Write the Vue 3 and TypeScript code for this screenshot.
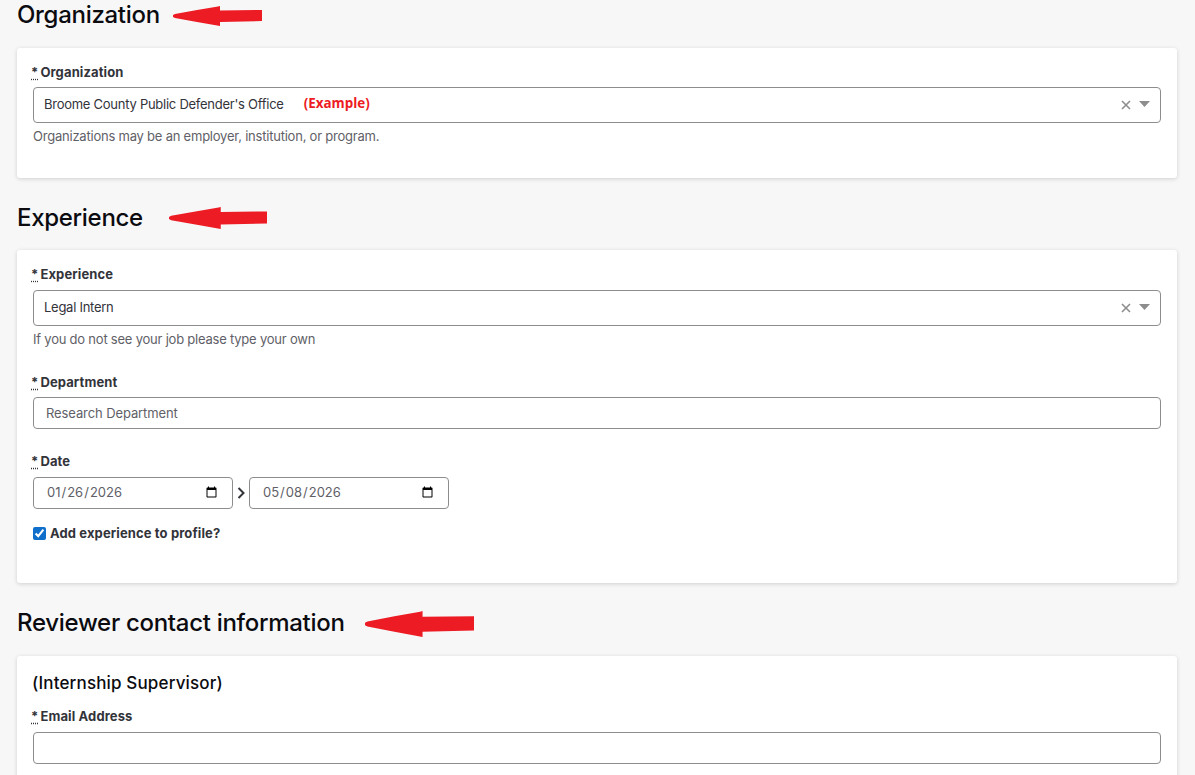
<script setup lang="ts">
const arrowPath = 'M0 9 L2 8 L24 4 L45 0.5 L47 0 L47 4.5 L89 4 L89 15 L47 16 L47 20 L24 16 L2 12 L0 11 Z'
</script>

<template>
  <main class="page">
    <header class="title-row first">
      <h2>Organization</h2>
      <svg class="arrow a1" viewBox="0 0 89 20" preserveAspectRatio="none"><path :d="arrowPath" /></svg>
    </header>
    <section class="card card-org">
      <label class="label"><abbr>*</abbr>Organization</label>
      <div class="select">
        <span class="value">Broome County Public Defender's Office</span>
        <span class="example">(Example)</span>
        <svg class="clear" viewBox="0 0 10 10"><path d="M1 1 L9 9 M9 1 L1 9" /></svg>
        <svg class="caret" viewBox="0 0 11 6"><path d="M0 0 H11 L5.5 6 Z" /></svg>
      </div>
      <p class="help">Organizations may be an employer, institution, or program.</p>
    </section>

    <header class="title-row">
      <h2>Experience</h2>
      <svg class="arrow a2" viewBox="0 0 89 20" preserveAspectRatio="none"><path :d="arrowPath" /></svg>
    </header>
    <section class="card card-exp">
      <label class="label tall"><abbr>*</abbr>Experience</label>
      <div class="select">
        <span class="value">Legal Intern</span>
        <svg class="clear" viewBox="0 0 10 10"><path d="M1 1 L9 9 M9 1 L1 9" /></svg>
        <svg class="caret" viewBox="0 0 11 6"><path d="M0 0 H11 L5.5 6 Z" /></svg>
      </div>
      <p class="help">If you do not see your job please type your own</p>

      <label class="label dept"><abbr>*</abbr>Department</label>
      <input class="text" type="text" value="Research Department" />

      <label class="label tall date-label"><abbr>*</abbr>Date</label>
      <div class="dates">
        <input class="date" type="date" value="2026-01-26" />
        <svg class="chev" viewBox="0 0 8 12"><path d="M1.5 1 L6.5 6 L1.5 11" /></svg>
        <input class="date" type="date" value="2026-05-08" />
      </div>
      <label class="check">
        <input type="checkbox" checked />
        <span>Add experience to profile?</span>
      </label>
    </section>

    <header class="title-row last">
      <h2>Reviewer contact information</h2>
      <svg class="arrow a3" viewBox="0 0 89 20" preserveAspectRatio="none"><path :d="arrowPath" /></svg>
    </header>
    <section class="card card-rev">
      <h3>(Internship Supervisor)</h3>
      <label class="label tall"><abbr>*</abbr>Email Address</label>
      <input class="text" type="text" />
    </section>
  </main>
</template>

<style scoped>
.page {
  height: 775px;
  overflow: hidden;
  box-sizing: border-box;
  padding: 0 18px 0 17px;
  background: #f7f7f7;
  font-family: Inter, "Liberation Sans", sans-serif;
  color: #33333a;
}
.title-row {
  display: flex;
  align-items: center;
  height: 28px;
  margin: 26px 0 18px;
}
.title-row.first {
  margin: 1px 0 19px;
}
.title-row.last {
  margin: 26px 0 19px;
}
h2 {
  margin: 0;
  font-size: 24px;
  line-height: 28px;
  font-weight: 500;
  letter-spacing: -0.3px;
  color: #0b0b10;
}
.arrow {
  flex: none;
  fill: #ed1c24;
}
.a1 { width: 89px; height: 20px; margin: 2px 0 0 13px; }
.a2 { width: 98px; height: 22px; margin: 0 0 0 26px; }
.a3 { width: 109px; height: 26px; margin: 2px 0 0 20px; }
.card {
  box-sizing: border-box;
  display: flex;
  flex-direction: column;
  padding: 14px 16px 0;
  background: #fff;
  border-radius: 3px;
  box-shadow: 0 1px 4px rgba(0, 0, 0, 0.16);
}
.card-org { height: 130px; }
.card-exp { height: 333px; }
.card-rev { height: 140px; }
.label {
  display: block;
  font-size: 13px;
  line-height: 20px;
  font-weight: 700;
  letter-spacing: 0.12px;
  color: #33333a;
  margin-bottom: 5px;
}
.label.tall { margin-bottom: 6px; }
.label abbr {
  margin: 0 2px 0 -2px;
  text-decoration: underline dotted;
  text-underline-offset: 2px;
}
.dept { margin-top: 24px; }
.date-label { margin-top: 22px; }
.select {
  box-sizing: border-box;
  display: flex;
  align-items: center;
  height: 36px;
  padding: 0 10px 0 10px;
  border: 1px solid #8d8d8d;
  border-radius: 4px;
  font-size: 13px;
}
.value {
  color: #33333a;
  letter-spacing: -0.26px;
  transform: translateY(-1px);
}
.example {
  margin-left: 20px;
  font-family: "Open Sans", sans-serif;
  font-size: 13.4px;
  font-weight: 700;
  color: #ed1c24;
  transform: translateY(-2px);
}
.clear {
  width: 10px;
  height: 10px;
  margin-left: auto;
  fill: none;
  stroke: #8d8d8d;
  stroke-width: 1.6;
}
.caret {
  width: 11px;
  height: 6px;
  margin-left: 8px;
  margin-top: -2px;
  fill: #8d8d8d;
}
.help {
  margin: 4px 0 0;
  font-size: 13px;
  line-height: 18px;
  letter-spacing: -0.22px;
  color: #5f5f68;
}
.text,
.date {
  box-sizing: border-box;
  height: 32px;
  padding: 0 12px;
  border: 1px solid #8d8d8d;
  border-radius: 4px;
  background: #fff;
  font-family: inherit;
  font-size: 13px;
  color: #5f5f68;
  outline: none;
}
.text {
  width: 100%;
  letter-spacing: -0.1px;
}
.dates {
  display: flex;
  align-items: center;
  gap: 4px;
}
.date {
  width: 200px;
  padding-bottom: 2px;
}
.chev {
  width: 8px;
  height: 12px;
  fill: none;
  stroke: #33333a;
  stroke-width: 2;
}
.check {
  display: flex;
  align-items: center;
  gap: 4px;
  margin-top: 14px;
  font-size: 13px;
  line-height: 20px;
  font-weight: 700;
  letter-spacing: 0.12px;
  color: #33333a;
}
.check input {
  width: 13px;
  height: 13px;
  margin: 0;
  accent-color: #0f6fcb;
}
h3 {
  margin: 3px 0 13px -1px;
  font-size: 17px;
  line-height: 20px;
  font-weight: 500;
  letter-spacing: 0.15px;
  color: #0b0b10;
}
</style>
